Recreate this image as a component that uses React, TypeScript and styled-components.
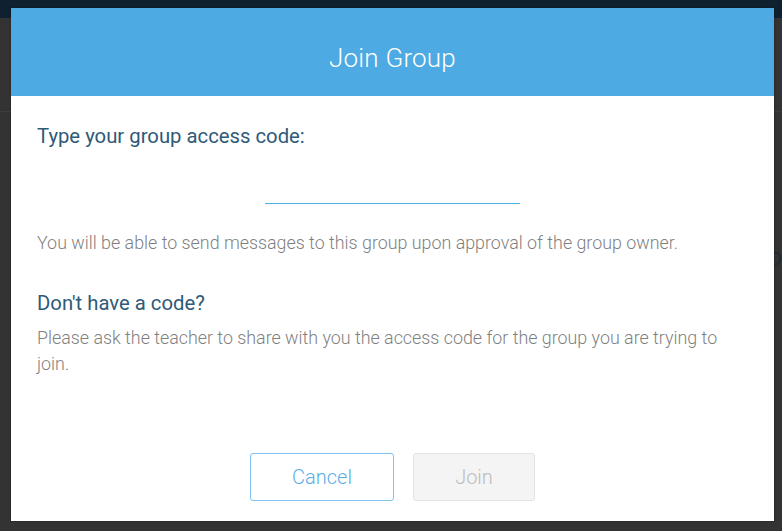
import React from "react";
import styled, { createGlobalStyle } from "styled-components";

const GlobalStyle = createGlobalStyle`
  html, body {
    margin: 0;
    padding: 0;
    height: 100%;
    background: #333333;
    font-family: Roboto, "Liberation Sans", sans-serif;
  }
  #root {
    height: 100%;
  }
  * {
    box-sizing: border-box;
  }
`;

const Page = styled.div`
  position: relative;
  height: 531px;
  overflow: hidden;
  background: #333333;
`;

const NavBar = styled.div`
  height: 18px;
  background: #0f2130;
`;

const PageBand = styled.div`
  height: 94px;
  border-bottom: 1px solid #3d3d3d;
`;

const PageContent = styled.div`
  display: flex;
  justify-content: flex-end;
  padding: 137px 0 0;
  color: #1e2a36;
  font-size: 18px;
  line-height: 20px;
`;

const Modal = styled.div`
  position: absolute;
  left: 11px;
  top: 8px;
  width: 763px;
  height: 513px;
  display: flex;
  flex-direction: column;
  background: #ffffff;
  box-shadow: 0 0 2px rgba(0, 0, 0, 0.4);
`;

const Header = styled.div`
  height: 88px;
  padding-top: 12px;
  display: flex;
  align-items: center;
  justify-content: center;
  background: #4daae3;
`;

const Title = styled.h2`
  margin: 0;
  color: #ffffff;
  font-size: 26px;
  font-weight: 300;
  letter-spacing: 0.2px;
`;

const Body = styled.div`
  flex: 1;
  display: flex;
  flex-direction: column;
  padding: 27px 26px 20px;
`;

const Heading = styled.h3<{ $gap?: number }>`
  margin: ${(p) => p.$gap ?? 0}px 0 0;
  color: #2e5a78;
  font-size: 20.3px;
  font-weight: 400;
  line-height: 26px;
`;

const CodeField = styled.label`
  align-self: center;
  display: block;
  width: 255px;
  height: 30px;
  margin-top: 25px;
  border-bottom: 1px solid #4eaee8;
`;

const CodeInput = styled.input`
  display: block;
  width: 100%;
  height: 29px;
  padding: 0;
  border: 0;
  outline: none;
  background: transparent;
  color: #2e5a78;
  font-family: inherit;
  font-size: 18px;
  text-align: center;
`;

const Note = styled.p<{ $gap?: number }>`
  margin: ${(p) => p.$gap ?? 0}px 0 0;
  color: #7f7f7f;
  font-size: 17.85px;
  font-weight: 300;
  line-height: 26px;
`;

const Actions = styled.div`
  margin-top: auto;
  display: flex;
  justify-content: center;
  gap: 19px;
`;

const Button = styled.button<{ $variant: "outline" | "disabled"; $width: number }>`
  width: ${(p) => p.$width}px;
  height: 48px;
  padding: 0;
  border-radius: 3px;
  font-family: inherit;
  font-size: 20px;
  font-weight: 300;
  cursor: ${(p) => (p.$variant === "disabled" ? "default" : "pointer")};
  border: 1px solid ${(p) => (p.$variant === "outline" ? "#80c2ef" : "#e2e2e2")};
  background: ${(p) => (p.$variant === "outline" ? "#ffffff" : "#f4f4f4")};
  color: ${(p) => (p.$variant === "outline" ? "#5aaee8" : "#bdbdbd")};
`;

const App = () => {
  return (
    <Page>
      <GlobalStyle />
      <NavBar />
      <PageBand />
      <PageContent>D</PageContent>
      <Modal>
        <Header>
          <Title>Join Group</Title>
        </Header>
        <Body>
          <Heading>Type your group access code:</Heading>
          <CodeField>
            <CodeInput type="text" />
          </CodeField>
          <Note $gap={26}>
            You will be able to send messages to this group upon approval of the group owner.
          </Note>
          <Heading $gap={34}>Don't have a code?</Heading>
          <Note $gap={9}>
            Please ask the teacher to share with you the access code for the group you are trying to
            join.
          </Note>
          <Actions>
            <Button $variant="outline" $width={144}>
              Cancel
            </Button>
            <Button $variant="disabled" $width={122} disabled>
              Join
            </Button>
          </Actions>
        </Body>
      </Modal>
    </Page>
  );
};

export default App;
